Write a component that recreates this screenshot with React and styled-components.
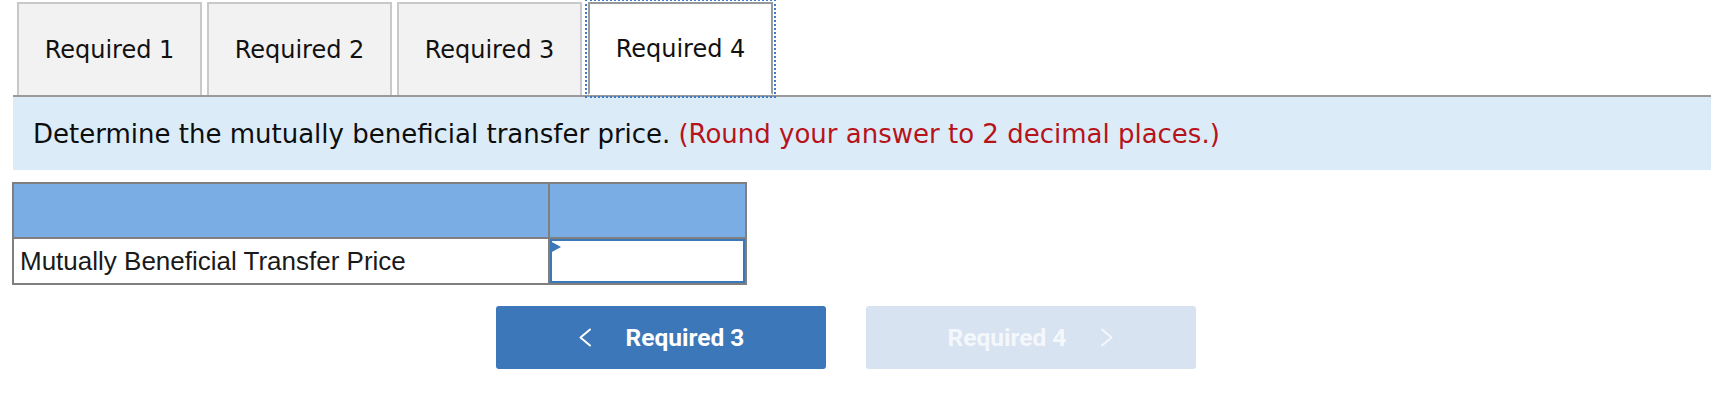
import React from 'react';
import styled, { createGlobalStyle } from 'styled-components';

const GlobalStyle = createGlobalStyle`
  html, body {
    margin: 0;
    padding: 0;
    background: #fff;
  }
`;

const Page = styled.div`
  padding: 0 0 0 12px;
  font-family: "DejaVu Sans", Verdana, sans-serif;
`;

const TabBar = styled.div`
  display: flex;
  gap: 5px;
  padding: 2px 0 0 4px;
  border-bottom: 2px solid #9a9a9a;
  margin-left: 1px;
`;

const Tab = styled.div`
  width: 185px;
  height: 93px;
  box-sizing: border-box;
  display: flex;
  align-items: center;
  justify-content: center;
  font-size: 24px;
  color: #111;
  background: ${p => (p.$active ? '#fff' : '#f2f2f2')};
  border: 2px solid ${p => (p.$active ? '#9a9a9a' : '#c9c9c9')};
  border-bottom: ${p => (p.$active ? '2px solid #fff' : 'none')};
  margin-bottom: ${p => (p.$active ? '-2px' : '0')};
  outline: ${p => (p.$active ? '2px dotted #3d7bc9' : 'none')};
  outline-offset: 1px;
  margin-left: ${p => (p.$active ? '1px' : '0')};
`;

const Prompt = styled.div`
  background: #dbecf8;
  margin-left: 1px;
  height: 73px;
  display: flex;
  align-items: center;
  padding-left: 20px;
  font-size: 26px;
  color: #0d0d0d;
`;

const Hint = styled.span`
  color: #b7131b;
  margin-left: 8px;
`;

const Table = styled.div`
  margin-top: 12px;
  width: 735px;
  display: grid;
  grid-template-columns: 534px 195px;
  grid-template-rows: 53px 44px;
  border: 2px solid #7f7f7f;
  box-sizing: border-box;
  background: #7f7f7f;
  gap: 2px;
`;

const HeadCell = styled.div`
  background: #7aade3;
`;

const LabelCell = styled.div`
  background: #fff;
  display: flex;
  align-items: center;
  padding-left: 6px;
  font-family: "Liberation Sans", Arial, sans-serif;
  font-size: 26px;
  color: #1a1a1a;
`;

const InputCell = styled.div`
  position: relative;
  background: #fff;
  border: 2px solid #3b77b9;
`;

const Flag = styled.span`
  position: absolute;
  left: -2px;
  top: 0;
  width: 0;
  height: 0;
  border-top: 6px solid transparent;
  border-bottom: 6px solid transparent;
  border-left: 11px solid #3b77b9;
`;

const NavRow = styled.div`
  display: flex;
  gap: 40px;
  margin-top: 21px;
  padding-left: 484px;
`;

const NavButton = styled.div`
  width: 330px;
  height: 63px;
  border-radius: 3px;
  display: flex;
  align-items: center;
  justify-content: center;
  gap: 34px;
  background: ${p => (p.$disabled ? '#d7e3f1' : '#3b77b9')};
  color: ${p => (p.$disabled ? '#f4f7fb' : '#fff')};
  font-family: Roboto, "Liberation Sans", sans-serif;
  font-weight: 700;
  font-size: 24.5px;
`;

const Chevron = ({ dir }) => (
  <svg width="14" height="19" viewBox="0 0 14 19" fill="none">
    <path
      d={dir === 'left' ? 'M12 1.5 L2.5 9.5 L12 17.5' : 'M2 1.5 L11.5 9.5 L2 17.5'}
      stroke="currentColor"
      strokeWidth="2"
      strokeLinecap="round"
      strokeLinejoin="round"
    />
  </svg>
);

export default function App() {
  const tabs = ['Required 1', 'Required 2', 'Required 3', 'Required 4'];
  return (
    <Page>
      <GlobalStyle />
      <TabBar>
        {tabs.map((t, i) => (
          <Tab key={t} $active={i === 3}>{t}</Tab>
        ))}
      </TabBar>
      <Prompt>
        Determine the mutually beneficial transfer price.
        <Hint>(Round your answer to 2 decimal places.)</Hint>
      </Prompt>
      <Table>
        <HeadCell />
        <HeadCell />
        <LabelCell>Mutually Beneficial Transfer Price</LabelCell>
        <InputCell>
          <Flag />
        </InputCell>
      </Table>
      <NavRow>
        <NavButton>
          <Chevron dir="left" />
          <span>Required 3</span>
        </NavButton>
        <NavButton $disabled>
          <span>Required 4</span>
          <Chevron dir="right" />
        </NavButton>
      </NavRow>
    </Page>
  );
}
